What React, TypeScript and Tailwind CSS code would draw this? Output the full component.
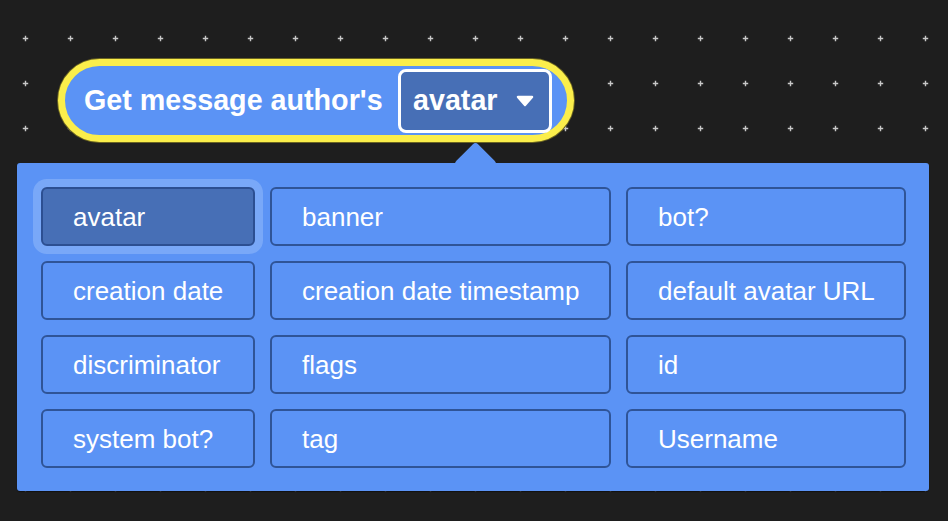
import React from "react";

const items: string[] = [
  "avatar",
  "banner",
  "bot?",
  "creation date",
  "creation date timestamp",
  "default avatar URL",
  "discriminator",
  "flags",
  "id",
  "system bot?",
  "tag",
  "Username",
];

export default function App() {
  return (
    <div
      className="relative w-[948px] h-[521px] overflow-hidden bg-[#1e1e1e]"
      style={{ fontFamily: '"Liberation Sans", Arial, Helvetica, sans-serif' }}
    >
      <svg className="absolute inset-0" width="948" height="521">
        <defs>
          <pattern id="grid" x="3" y="16" width="45" height="45" patternUnits="userSpaceOnUse">
            <path d="M19.8 22.5h5.4M22.5 19.8v5.4" stroke="#c8c8c8" strokeWidth="1.4" fill="none" />
          </pattern>
        </defs>
        <rect width="948" height="521" fill="url(#grid)" />
      </svg>

      <div className="relative flex flex-col items-start pt-[59px] pl-[17px]">
        {/* Block */}
        <div className="ml-[41px] flex items-center h-[83px] w-[516px] rounded-full border-[7px] border-[#fbee4b] bg-[#5b93f5] pl-[19px] pr-[15px] shadow-[0_0_0_1px_#6b6422]">
          <span className="text-white font-bold text-[28.7px] leading-none whitespace-nowrap">
            Get message author's
          </span>
          <div className="ml-auto flex items-center w-[154px] h-[64px] rounded-[8px] border-[3px] border-white bg-[#476fb6] pl-[12px]">
            <span className="text-white font-bold text-[28.7px] leading-none">avatar</span>
            <svg className="ml-[17px]" width="20" height="12" viewBox="0 0 20 12">
              <path d="M3 2 L17 2 L10 10 Z" fill="#fff" stroke="#fff" strokeWidth="2.5" strokeLinejoin="round" />
            </svg>
          </div>
        </div>

        {/* Dropdown panel */}
        <div className="relative mt-[21px] w-[912px] h-[328px] rounded-[3px] bg-[#5b93f5] p-[24px] shadow-[0_1px_1px_rgba(0,0,0,0.45)]">
          <div className="absolute left-[443px] top-[-15px] w-[31px] h-[31px] rotate-45 rounded-[4px] bg-[#5b93f5]" />
          <div className="relative grid grid-cols-[214px_341px_280px] auto-rows-[59px] gap-[15px]">
            {items.map((label, i) => (
              <div
                key={label}
                className={
                  i === 0
                    ? "flex items-center rounded-[6px] border-2 border-[#2c4f92] bg-[#476fb6] pl-[30px] text-white text-[26px] leading-none shadow-[0_0_0_8px_#79a8f8]"
                    : "flex items-center rounded-[6px] border-2 border-[#2f5497] bg-[#5b93f5] pl-[30px] text-white text-[26px] leading-none"
                }
              >
                {label}
              </div>
            ))}
          </div>
        </div>
      </div>
    </div>
  );
}
